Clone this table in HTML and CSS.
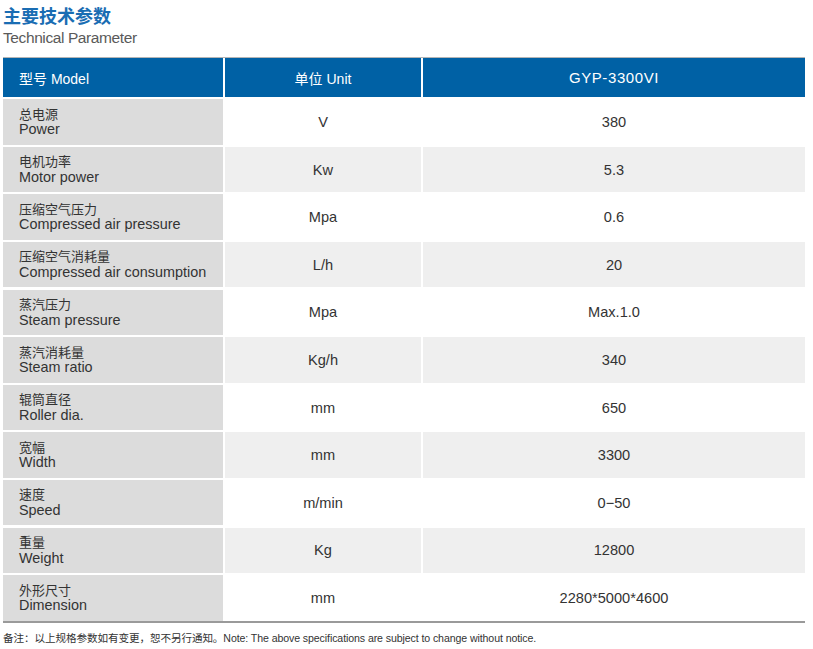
FILE: index.html
```html
<!DOCTYPE html>
<html lang="zh">
<head>
<meta charset="utf-8">
<title>主要技术参数</title>
<link rel="stylesheet" href="styles.css">
</head>
<body>
<div class="page">
  <div class="heading">
    <div class="title-cn">主要技术参数</div>
    <div class="title-en">Technical Parameter</div>
  </div>
  <div class="table">
    <div class="head first">型号 Model</div>
    <div class="head">单位 Unit</div>
    <div class="head model">GYP-3300VI</div>

    <div class="label"><span>总电源</span><span>Power</span></div>
    <div class="cell">V</div><div class="cell">380</div>

    <div class="label"><span>电机功率</span><span>Motor power</span></div>
    <div class="cell alt">Kw</div><div class="cell alt">5.3</div>

    <div class="label"><span>压缩空气压力</span><span>Compressed air pressure</span></div>
    <div class="cell">Mpa</div><div class="cell">0.6</div>

    <div class="label"><span>压缩空气消耗量</span><span>Compressed air consumption</span></div>
    <div class="cell alt">L/h</div><div class="cell alt">20</div>

    <div class="label"><span>蒸汽压力</span><span>Steam pressure</span></div>
    <div class="cell">Mpa</div><div class="cell">Max.1.0</div>

    <div class="label"><span>蒸汽消耗量</span><span>Steam ratio</span></div>
    <div class="cell alt">Kg/h</div><div class="cell alt">340</div>

    <div class="label"><span>辊筒直径</span><span>Roller dia.</span></div>
    <div class="cell">mm</div><div class="cell">650</div>

    <div class="label"><span>宽幅</span><span>Width</span></div>
    <div class="cell alt">mm</div><div class="cell alt">3300</div>

    <div class="label"><span>速度</span><span>Speed</span></div>
    <div class="cell">m/min</div><div class="cell">0−50</div>

    <div class="label"><span>重量</span><span>Weight</span></div>
    <div class="cell alt">Kg</div><div class="cell alt">12800</div>

    <div class="label"><span>外形尺寸</span><span>Dimension</span></div>
    <div class="cell">mm</div><div class="cell">2280*5000*4600</div>
  </div>
  <div class="note">备注：以上规格参数如有变更，恕不另行通知。Note: The above specifications are subject to change without notice.</div>
</div>
</body>
</html>
```

FILE: styles.css
```css
html, body {
  margin: 0;
  padding: 0;
  background: #ffffff;
}
body {
  font-family: "Liberation Sans", Arial, "Noto Sans CJK SC", sans-serif;
  color: #333333;
}
.page {
  width: 813px;
  height: 649px;
  padding: 3px 0 0 3px;
  box-sizing: border-box;
}
.heading {
  height: 54px;
}
.title-cn {
  font-family: "Noto Sans CJK SC", sans-serif;
  font-weight: 700;
  font-size: 18px;
  line-height: 24px;
  color: #1a6db3;
}
.title-en {
  font-family: "Liberation Sans", Arial, sans-serif;
  font-size: 15.5px;
  line-height: 20px;
  color: #5a5a5a;
  letter-spacing: -0.4px;
  margin-top: 1px;
}
.table {
  display: grid;
  grid-template-columns: 220px 196px 382px;
  grid-template-rows: 39px repeat(11, 45.3px);
  column-gap: 2px;
  row-gap: 2.3px;
  width: 802px;
  border-top: 1px solid #b5b5b5;
  border-bottom: 2px solid #9a9a9a;
}
.head {
  background: #0061a5;
  color: #ffffff;
  font-size: 14px;
  display: flex;
  align-items: center;
  justify-content: center;
}
.head.first {
  justify-content: flex-start;
  padding-left: 16px;
}
.head.model {
  font-size: 15px;
  letter-spacing: 0.6px;
}
.label {
  background: #dcdcdc;
  display: flex;
  flex-direction: column;
  justify-content: center;
  gap: 0.5px;
  padding-left: 16px;
  font-size: 14.4px;
  line-height: 15px;
  color: #333333;
}
.label span:first-child {
  font-family: "Liberation Sans", Arial, "Noto Sans CJK SC", sans-serif;
  font-size: 13px;
  line-height: 15px;
}
.cell {
  background: #ffffff;
  display: flex;
  align-items: center;
  justify-content: center;
  font-size: 14.6px;
  color: #333333;
}
.cell.alt {
  background: #efefef;
}
.note {
  margin-top: 8px;
  font-size: 10.6px;
  line-height: 14px;
  color: #333333;
  letter-spacing: -0.1px;
}
```
